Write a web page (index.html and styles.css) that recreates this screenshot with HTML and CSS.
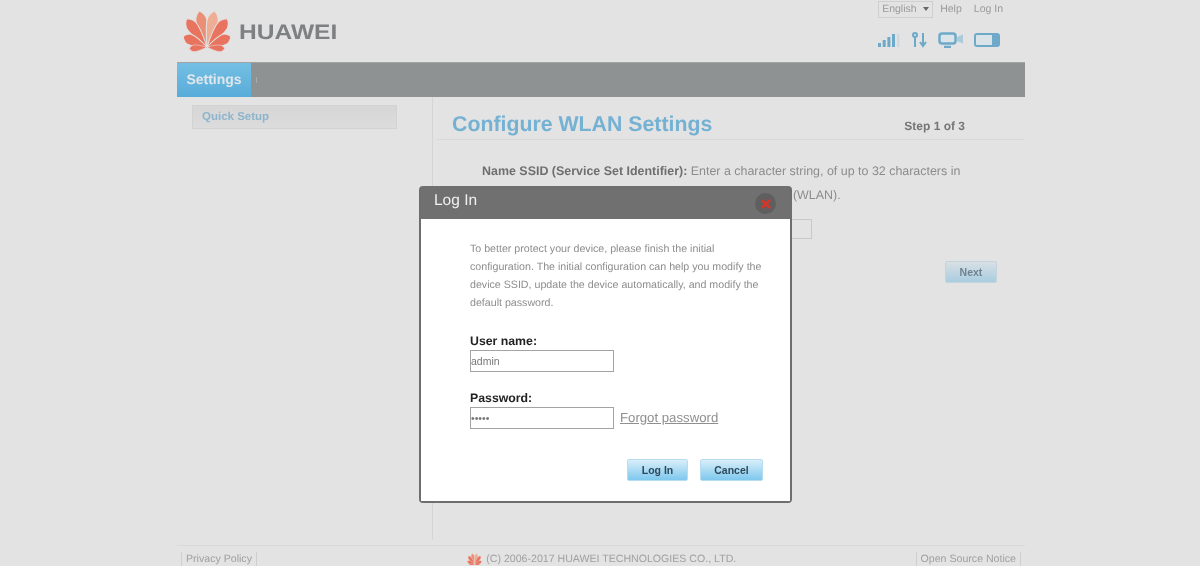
FILE: index.html
```html
<!DOCTYPE html>
<html lang="en">
<head>
    <meta charset="UTF-8">
    <title>HUAWEI - Configure WLAN Settings</title>
    <link rel="stylesheet" href="styles.css">
</head>
<body>
    <svg class="defs" width="0" height="0">
        <defs>
            <path id="petal" d="M25 37 C22 27 19 16 19.500 9 C20 5 22.500 2 25 0 C27.500 2 30 5 30.500 9 C31 16 28 27 25 37Z"/>
            <symbol id="flower" viewBox="0 0 50 38" overflow="visible">
                <g fill="#e8745f" stroke="#e3e3e3" stroke-width="1">
                    <use href="#petal" fill="#ea8f76" transform="rotate(-12 25 37)"/>
                    <use href="#petal" fill="#eeae96" transform="rotate(12 25 37)"/>
                    <use href="#petal" transform="rotate(-36 25 37) translate(25 37) scale(1 .94) translate(-25 -37)"/>
                    <use href="#petal" transform="rotate(36 25 37) translate(25 37) scale(1 .94) translate(-25 -37)"/>
                    <use href="#petal" transform="rotate(-66 25 37) translate(25 37) scale(.95 .7) translate(-25 -37)"/>
                    <use href="#petal" transform="rotate(66 25 37) translate(25 37) scale(.95 .7) translate(-25 -37)"/>
                    <use href="#petal" transform="rotate(-96 25 37) translate(25 37) scale(.6 .48) translate(-25 -37)"/>
                    <use href="#petal" transform="rotate(96 25 37) translate(25 37) scale(.6 .48) translate(-25 -37)"/>
                </g>
            </symbol>
        </defs>
    </svg>

    <div class="page">
        <header class="top">
            <div class="logo">
                <svg class="logo-mark" width="50" height="38"><use href="#flower"/></svg>
                <span class="logo-text">HUAWEI</span>
            </div>
            <div class="top-right">
                <div class="top-links">
                    <span class="lang">English <i class="lang-arrow"></i></span>
                    <a>Help</a>
                    <a>Log In</a>
                </div>
                <div class="status-icons">
                    <svg width="22" height="16" viewBox="0 0 22 16">
                        <g fill="#6fa9c9">
                            <rect x="0" y="11" width="3" height="4"/>
                            <rect x="4.700" y="8" width="3" height="7"/>
                            <rect x="9.400" y="5" width="3" height="10"/>
                            <rect x="14" y="2" width="3" height="13"/>
                        </g>
                        <rect x="19" y="2" width="2.500" height="13" fill="#cfd9df"/>
                    </svg>
                    <svg width="18" height="16" viewBox="0 0 18 16" fill="none" stroke="#6fa9c9" stroke-width="2">
                        <path d="M5 15V5"/>
                        <circle cx="5" cy="3" r="2"/>
                        <path d="M13 1v12M10 10l3 4 3-4"/>
                    </svg>
                    <svg width="26" height="16" viewBox="0 0 26 16" fill="none" stroke="#6fa9c9" stroke-width="2.500">
                        <rect x="1.500" y="1.500" width="16" height="10" rx="2.500" fill="#dbe4e9"/>
                        <path d="M6 15h7" />
                        <path d="M19 5l6-2.500v9L19 9z" fill="#a9cbdc" stroke="none"/>
                    </svg>
                    <svg width="26" height="16" viewBox="0 0 26 16" fill="none">
                        <rect x="1" y="2" width="24" height="12" rx="2" fill="#d9e3e8" stroke="#6fa9c9" stroke-width="2"/>
                        <rect x="18" y="3" width="6" height="10" fill="#6fa9c9"/>
                    </svg>
                </div>
            </div>
        </header>

        <nav class="menu">
            <a class="menu-active">Settings</a>
            <span class="menu-sep"></span>
        </nav>

        <div class="body-row">
            <aside class="side">
                <div class="side-item">Quick Setup</div>
            </aside>
            <main class="content">
                <div class="content-head">
                    <h1>Configure WLAN Settings</h1>
                    <span class="step">Step 1 of 3</span>
                </div>
                <p class="desc"><b>Name SSID (Service Set Identifier):</b> Enter a character string, of up to 32 characters in<br><span class="desc-line2">length, as the name of your wireless local area network (WLAN).</span></p>
                <div class="ssid-row"><span class="ssid-box"></span></div>
                <div class="next-row"><button class="btn btn-dim">Next</button></div>
            </main>
        </div>

        <footer class="foot">
            <a class="foot-link">Privacy Policy</a>
            <span class="copy">
                <svg width="15" height="12"><use href="#flower"/></svg>
                (C) 2006-2017 HUAWEI TECHNOLOGIES CO., LTD.
            </span>
            <a class="foot-link">Open Source Notice</a>
        </footer>
    </div>

    <div class="modal">
        <div class="modal-title">
            <span class="modal-title-text">Log In</span>
            <span class="modal-close">
                <svg width="10" height="10" viewBox="0 0 10 10" stroke="#d8352a" stroke-width="2.500"><path d="M1 1l8 8M9 1l-8 8"/></svg>
            </span>
        </div>
        <div class="modal-body">
            <p class="modal-text">To better protect your device, please finish the initial configuration. The initial configuration can help you modify the device SSID, update the device automatically, and modify the default password.</p>
            <label class="field-label">User name:</label>
            <input class="field" type="text" value="admin">
            <label class="field-label field-label-2">Password:</label>
            <div class="pass-row">
                <input class="field" type="password" value="admin">
                <a class="forgot">Forgot password</a>
            </div>
            <div class="modal-btns">
                <button class="btn">Log In</button>
                <button class="btn btn-cancel">Cancel</button>
            </div>
        </div>
    </div>
</body>
</html>
```

FILE: styles.css
```css
* { box-sizing: border-box; margin: 0; padding: 0; }

html, body {
    height: 566px;
    overflow: hidden;
}

body {
    font-family: 'Liberation Sans', Arial, sans-serif;
    background: #e3e3e3;
    color: #8a8a8a;
    position: relative;
    text-rendering: geometricPrecision;
}

.defs { position: absolute; }

.page {
    width: 848px;
    margin-left: 177px;
    height: 566px;
    display: flex;
    flex-direction: column;
    filter: blur(0.5px);
}

/* header */
.top {
    height: 62px;
    display: flex;
    justify-content: space-between;
}

.logo {
    display: flex;
    align-items: center;
    gap: 7px;
    padding: 8px 0 0 5px;
    height: 50px;
}

.logo-mark { overflow: visible; margin-top: 0; }

.logo-text {
    font-size: 21px;
    font-weight: bold;
    color: #7d8182;
    transform: scaleX(1.17);
    transform-origin: left;
    margin-top: 8px;
}

.top-right {
    display: flex;
    flex-direction: column;
    align-items: flex-end;
    padding-right: 22px;
}

.top-links {
    display: flex;
    align-items: center;
    gap: 7px;
    height: 18px;
    font-size: 10.500px;
    color: #9a9a9a;
}

.top-links a + a { margin-left: 5px; }

.lang {
    border: 1px solid #cfcfcf;
    height: 17px;
    width: 55px;
    padding-left: 3px;
    line-height: 15px;
}

.lang-arrow {
    display: inline-block;
    width: 0;
    height: 0;
    margin-left: 3px;
    vertical-align: 1px;
    border-left: 3px solid transparent;
    border-right: 3px solid transparent;
    border-top: 4px solid #666;
}

.status-icons {
    display: flex;
    align-items: center;
    gap: 10px;
    margin-top: 14px;
    margin-right: 3px;
}

/* nav bar */
.menu {
    height: 35px;
    background: #8e9292;
    display: flex;
    align-items: center;
    border-top: 1px solid #a2a4a4;
}

.menu-active {
    width: 74px;
    height: 34px;
    background: linear-gradient(#74bfe4, #58acd9);
    color: #dfe7ea;
    font-size: 14px;
    font-weight: bold;
    line-height: 32px;
    text-align: center;
}

.menu-sep {
    width: 1px;
    height: 6px;
    background: #a9abab;
    margin-left: 5px;
}

/* main */
.body-row {
    flex: 1;
    display: flex;
    min-height: 0;
}

.side {
    width: 256px;
    padding: 8px 0 0 15px;
    border-right: 1px solid #d5d5d5;
    margin-bottom: 5px;
}

.side-item {
    width: 205px;
    height: 24px;
    background: linear-gradient(#d6d6d6, #dcdcdc);
    border: 1px solid #d3d3d3;
    color: #8db4cc;
    font-size: 11.500px;
    font-weight: bold;
    line-height: 23px;
    padding-left: 9px;
}

.content {
    flex: 1;
    padding: 0 0 0 4px;
}

.content-head {
    height: 43px;
    display: flex;
    justify-content: space-between;
    align-items: flex-end;
    border-bottom: 1px solid #d9d9d9;
    padding: 0 60px 1px 15px;
}

h1 {
    font-size: 21.300px;
    font-weight: bold;
    color: #74b1d3;
    line-height: 28px;
}

.step {
    font-size: 12px;
    font-weight: bold;
    color: #767676;
    margin-bottom: 5px;
}

.desc {
    margin: 19px 0 0 45px;
    font-size: 12.450px;
    line-height: 24px;
    color: #8c8c8c;
}

.desc b { color: #6f6f6f; }

.desc-line2 { word-spacing: 0.4px; }

.ssid-row {
    height: 20px;
    margin-top: 12px;
    margin-left: 340px;
}

.ssid-box {
    display: block;
    width: 35px;
    height: 20px;
    border: 1px solid #c8c8c8;
}

.next-row {
    margin-top: 22px;
    padding-left: 508px;
}

.btn {
    font-family: inherit;
    width: 61px;
    height: 22px;
    border: 1px solid #b5dcef;
    border-radius: 2px;
    background: linear-gradient(#d9eef9, #7ec8ee);
    color: #2c4a5c;
    font-size: 10.500px;
    font-weight: bold;
}

.btn-dim {
    width: 52px;
    background: linear-gradient(#d8e0e4, #a9cde0);
    border-color: #c4d4dc;
    color: #6f8290;
}

/* footer */
.foot {
    height: 21px;
    border-top: 1px solid #d9d9d9;
    display: flex;
    justify-content: space-between;
    align-items: center;
    padding: 6px 4px 0 4px;
    font-size: 10.600px;
    color: #a0a0a0;
}

.foot-link {
    border-left: 1px solid #cfcfcf;
    border-right: 1px solid #cfcfcf;
    padding: 0 4px;
    line-height: 14px;
}

.copy {
    display: flex;
    align-items: center;
    gap: 4px;
    margin-left: 31px;
}

/* login dialog, sits over the page */
.modal {
    position: absolute;
    left: 419px;
    top: 186px;
    width: 373px;
    height: 317px;
    background: #707070;
    border: 2px solid #6e6e6e;
    border-top-width: 0;
    border-radius: 4px;
    display: flex;
    flex-direction: column;
    filter: blur(0.4px);
}

.modal-title {
    height: 33px;
    display: flex;
    justify-content: space-between;
    align-items: center;
    padding: 0 14px 0 13px;
    color: #f0f0f0;
    font-size: 15.500px;
}

.modal-title-text { padding-bottom: 4px; }

.modal-close {
    width: 21px;
    height: 21px;
    margin-top: 2px;
    border-radius: 50%;
    background: #5f5f5f;
    display: flex;
    align-items: center;
    justify-content: center;
}

.modal-body {
    flex: 1;
    background: #fff;
    padding: 21px 27px 0 49px;
}

.modal-text {
    font-size: 10.650px;
    line-height: 18px;
    color: #8d8d8d;
    height: 72px;
}

.field-label {
    display: block;
    margin-top: 21px;
    font-size: 12.300px;
    font-weight: bold;
    color: #222;
    line-height: 16px;
}

.field-label-2 {
    margin-top: 18px;
    line-height: 16px;
}

.field {
    display: block;
    width: 144px;
    height: 22px;
    margin-top: 1px;
    border: 1px solid #a3a3a3;
    padding: 0;
    font-family: inherit;
    font-size: 10.500px;
    color: #777;
    outline: none;
}

.pass-row {
    display: flex;
    align-items: center;
    gap: 6px;
}

.forgot {
    font-size: 13.200px;
    color: #8f8f8f;
    text-decoration: underline;
}

.modal-btns {
    display: flex;
    justify-content: flex-end;
    gap: 12px;
    margin-top: 30px;
}

.btn-cancel {
    width: 63px;
}
```
